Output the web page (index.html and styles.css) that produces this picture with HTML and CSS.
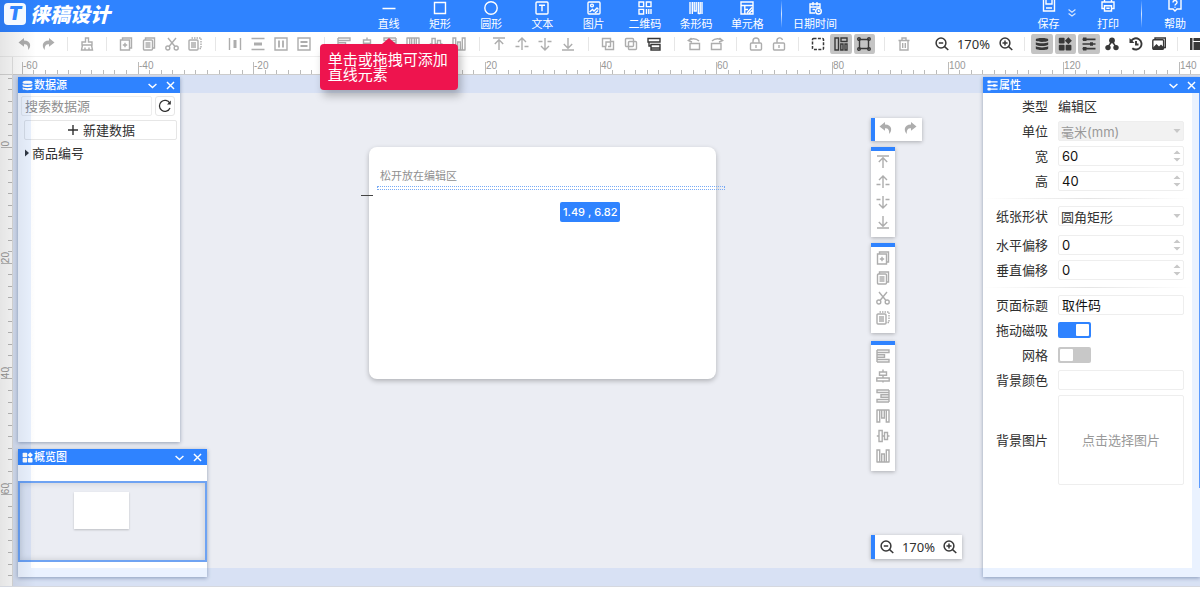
FILE: index.html
```html
<!DOCTYPE html>
<html lang="zh-CN">
<head>
<meta charset="utf-8">
<title>徕稿设计</title>
<link rel="stylesheet" href="styles.css">
</head>
<body>
<svg class="sprite" aria-hidden="true">
  <symbol id="undo" viewBox="0 0 14 14"><path class="fill" d="M6 1 .5 5.400 6 9.800V7.200c3 0 4.400 1.200 4.200 5.800C13 10.500 13.800 3.800 6 3.600z"/></symbol>
  <symbol id="redo" viewBox="0 0 14 14"><path class="fill" d="M8 1l5.500 4.400L8 9.800V7.200c-3 0-4.400 1.200-4.200 5.800C1 10.500.2 3.800 8 3.600z"/></symbol>
  <symbol id="brush" viewBox="0 0 14 14"><path d="M5.500 5V1h3v4H12v3H2V5zM2.500 8 1.500 13h11L11.500 8M5 13v-2.500M9 13v-2.500"/></symbol>
  <symbol id="copyplus" viewBox="0 0 14 14"><path d="M1.500 3h9v10h-9zM3.500 3V1h9v10h-2M6 5.800v4.400M3.800 8h4.400"/></symbol>
  <symbol id="copy" viewBox="0 0 14 14"><rect x="1.500" y="3" width="9" height="10" rx="1"/><path d="M3.500 3V1h9v10h-2M3.500 6h5M3.500 8h5M3.500 10h5"/></symbol>
  <symbol id="cut" viewBox="0 0 14 14"><circle cx="2.800" cy="11" r="2"/><circle cx="11.200" cy="11" r="2"/><path d="M3 1l7 8.500M11 1 4 9.500"/></symbol>
  <symbol id="dup" viewBox="0 0 14 14"><rect x="1" y="3" width="9" height="10" rx="1"/><path d="M3 6h5M3 8h5M3 10h5"/><path stroke-dasharray="1.500 1" d="M3.500 1h9.500v10.500h-3"/></symbol>
  <symbol id="disth" viewBox="0 0 14 14"><path d="M1.500 1v12M12.500 1v12"/><path class="fill" d="M5.500 3h3v8h-3z"/></symbol>
  <symbol id="distv" viewBox="0 0 14 14"><path d="M.5 1.500h13M.5 12.500h13"/><path class="fill" d="M3 5.500h8v3H3z"/></symbol>
  <symbol id="boxh" viewBox="0 0 14 14"><path d="M1 1h12v12H1z"/><path stroke-width="1.800" d="M5 3.500v7M9 3.500v7"/></symbol>
  <symbol id="boxv" viewBox="0 0 14 14"><path d="M1 1h12v12H1z"/><path stroke-width="1.800" d="M3.500 5h7M3.500 9h7"/></symbol>
  <symbol id="al" viewBox="0 0 14 14"><path d="M1 1v12M1 1h12v2.500H1M1 5.700h7.500v2.600H1M1 10.500h12V13H1"/></symbol>
  <symbol id="ac" viewBox="0 0 14 14"><path d="M3.500 3h7v3.200h-7zM.8 9h12.400v3H.8zM7 .5V3M7 6.200V9M7 12v1.500"/></symbol>
  <symbol id="ar" viewBox="0 0 14 14"><path d="M13 1v12M13 1H1v2.500h12M13 5.700H5v2.600h8M13 10.500H1V13h12"/></symbol>
  <symbol id="at" viewBox="0 0 14 14"><path d="M.5 1h13M1 1v12h2.700V1M5.700 1v8h2.600V1M10.300 1v12H13V1"/></symbol>
  <symbol id="am" viewBox="0 0 14 14"><path d="M3 1.500h3.200v11H3zM8.500 3.500h3v7h-3zM.8 7H3M6.200 7h2.300M11.500 7h2"/></symbol>
  <symbol id="ab" viewBox="0 0 14 14"><path d="M.5 13h13M1 13V1h2.700v12M5.700 13V5h2.600v8M10.300 13V1H13v12"/></symbol>
  <symbol id="top" viewBox="0 0 14 14"><path d="M1 1h12M7 13V3M2.800 7 7 2.800 11.200 7"/></symbol>
  <symbol id="up" viewBox="0 0 14 14"><path d="M7 13V1M3 5l4-4 4 4M.5 9.500h4M9.500 9.500h4"/></symbol>
  <symbol id="down" viewBox="0 0 14 14"><path d="M7 1v12M3 9l4 4 4-4M.5 4.500h4M9.500 4.500h4"/></symbol>
  <symbol id="bottom" viewBox="0 0 14 14"><path d="M1 13h12M7 1v10M2.800 7 7 11.200 11.200 7"/></symbol>
  <symbol id="group" viewBox="0 0 14 14"><path d="M5 9.500H1.500v-8h8V5M9 4.500h3.500v8h-8V9M5 9.500V5h4.500v4.500H7"/></symbol>
  <symbol id="ungroup" viewBox="0 0 14 14"><rect x="1.500" y="1.500" width="8" height="8" rx="1"/><rect x="4.500" y="4.500" width="8" height="8" rx="1"/></symbol>
  <symbol id="layers" viewBox="0 0 14 14"><path d="M1 1.500h12V5H1zM4 7.500h9V11H4zM2 5v4h2M4 11v2h9v-2"/></symbol>
  <symbol id="rotl" viewBox="0 0 14 14"><path d="M3 6.500h9.500v6H3zM1.500 3.500C4 1.300 9 1 12 4M4.500 1 1.300 3.600 5 5"/></symbol>
  <symbol id="rotr" viewBox="0 0 14 14"><path d="M1.500 6.500H11v6H1.500zM12.500 3.500C10 1.300 5 1 2 4M9.500 1l3.200 2.600L9 5"/></symbol>
  <symbol id="lock" viewBox="0 0 14 14"><rect x="1.500" y="6" width="11" height="7" rx="1"/><path d="M4 6V4a3 3 0 0 1 6 0v2M7 8v3"/></symbol>
  <symbol id="unlock" viewBox="0 0 14 14"><rect x="1.500" y="6" width="11" height="7" rx="1"/><path d="M5 6V4a2.800 2.800 0 0 1 5.500-1M7 8v3"/></symbol>
  <symbol id="marquee" viewBox="0 0 14 14"><rect x="1.500" y="1.500" width="11" height="11" rx="1" stroke-width="1.500" stroke-dasharray="3 1.400"/></symbol>
  <symbol id="snap" viewBox="0 0 14 14"><path d="M1 1h3.500v12H1zM7 1h6v3.500H7zM6.800 7H9v6H6.800zM11 7h2v6h-2z"/></symbol>
  <symbol id="bound" viewBox="0 0 14 14"><path d="M2.500 2.500h9v9h-9z"/><circle cx="2" cy="2" r="1.300"/><circle cx="12" cy="2" r="1.300"/><circle cx="2" cy="12" r="1.300"/><circle cx="12" cy="12" r="1.300"/></symbol>
  <symbol id="trash" viewBox="0 0 14 14"><path d="M1.500 3.500h11M5 3V1h4v2M3 3.500V13h8V3.500M5.700 6v5M8.300 6v5"/></symbol>
  <symbol id="zout" viewBox="0 0 14 14"><circle cx="6" cy="6" r="4.900" stroke-width="1.500"/><path stroke-width="1.500" d="M3.800 6h4.400M9.600 9.600 13.300 13"/></symbol>
  <symbol id="zin" viewBox="0 0 14 14"><circle cx="6" cy="6" r="4.900" stroke-width="1.500"/><path stroke-width="1.500" d="M3.500 6h5M6 3.500v5M9.600 9.600 13.300 13"/></symbol>
  <symbol id="db" viewBox="0 0 14 14"><path class="fill" d="M.8 2.500C1 .5 13 .5 13.200 2.500v1.200C11 5.300 3 5.300.8 3.700zM.8 5.200c2.500 1.500 9.900 1.500 12.400 0v2.500c-2.200 1.700-10.200 1.700-12.400 0zM.8 9.300c2.500 1.500 9.900 1.500 12.400 0v2.200c-.2 2-12.200 2-12.400 0z"/></symbol>
  <symbol id="widgets" viewBox="0 0 14 14"><rect class="fill" x=".8" y=".8" width="5.800" height="5.800" rx="1"/><path class="fill" d="M10.400.2 13.900 3.700 10.400 7.200 6.900 3.700z"/><rect class="fill" x=".8" y="7.700" width="5.800" height="5.800" rx="1"/><rect class="fill" x="7.600" y="7.700" width="5.800" height="5.800" rx="1"/></symbol>
  <symbol id="props" viewBox="0 0 14 14"><path stroke-width="1.700" d="M.5 2.300h13M.5 7h13M.5 11.700h13"/><path class="fill" d="M1 .6h3.500V4H1zM8 5.300h3v3.400H8zM1 10h3.500v3.400H1z"/></symbol>
  <symbol id="nodes" viewBox="0 0 14 14"><circle class="fill" cx="7" cy="3.400" r="2.900"/><circle class="fill" cx="3" cy="10.600" r="2.700"/><circle class="fill" cx="11" cy="10.600" r="2.700"/><path stroke-width="1.500" d="M3 10 7 4l4 6"/></symbol>
  <symbol id="history" viewBox="0 0 14 14"><path stroke-width="1.900" d="M2 4.200A5.600 5.600 0 1 1 3.300 11.200M7 4v3.500h2.500"/><path class="fill" d="M.5 1v5h5z"/></symbol>
  <symbol id="gallery" viewBox="0 0 14 14"><rect x=".8" y="2.800" width="10.800" height="9.500" rx="1"/><path d="M3 2.500V1h10.400v9.500H12"/><path class="fill" d="M1 10.500 4.500 7 7 9.500l2-2 2.500 2.500v2H1z"/></symbol>
  <symbol id="layout" viewBox="0 0 14 14"><path class="fill" d="M0 1h2.500v12H0zM3.500 1H14v3H3.500zM3.500 5H14v8H3.500z"/></symbol>
  <symbol id="line" viewBox="0 0 14 14"><path stroke-width="1.500" d="M.5 7.500h13"/></symbol>
  <symbol id="rect" viewBox="0 0 14 14"><path d="M1.500 1.500h11v11h-11z"/></symbol>
  <symbol id="circle" viewBox="0 0 14 14"><circle cx="7" cy="7" r="6.200"/></symbol>
  <symbol id="text" viewBox="0 0 14 14"><rect x="1" y="1" width="12" height="12" rx="1"/><path d="M4 4.300h6M7 4.300v6"/></symbol>
  <symbol id="image" viewBox="0 0 14 14"><rect x="1" y="1" width="12" height="12" rx="1"/><circle cx="5" cy="4.500" r="1.400"/><path d="m2.500 11 3-2.500 1.500 1.500 3-3 1.500 1.500M8 12l3-2.500"/></symbol>
  <symbol id="qr" viewBox="0 0 14 14"><path d="M1 1h4.600v4.600H1zM8.400 1H13v4.600H8.400zM1 8.400h4.600V13H1zM8.500 8v5M10.800 8v5M13 8v5"/></symbol>
  <symbol id="bar" viewBox="0 0 14 14"><path d="M1 1v12M3.300 1v12M5.200 1v9h2V1M9.300 1v12M13 1v12M11.200 1v12M9.300 12.500h2"/></symbol>
  <symbol id="cell" viewBox="0 0 14 14"><path d="M1 1h12v12H1zM1 4.500h12M4.800 4.500V13M4.800 8.500H8M7 12l5-5.500M9 12.500l4-4"/></symbol>
  <symbol id="date" viewBox="0 0 14 14"><path d="M7 12H2V3h10v4M2 6h10M5 1v3.500M9 1v3.500M4.500 8.500h2.500"/><circle cx="10.500" cy="10.200" r="2.800"/><path d="M10.500 8.800v1.500h1.300"/></symbol>
  <symbol id="save" viewBox="0 0 14 14"><path d="M1.500 0v13h11V0M4 0v6h6V0M4 10h6"/></symbol>
  <symbol id="print" viewBox="0 0 14 14"><path d="M3.500 4V0h7v4M3.500 10.500H1V4h12v6.500h-2.500M3.500 7.800h7V13h-7zM5.300 10.300h3.400"/></symbol>
  <symbol id="help" viewBox="0 0 14 14"><path d="M4 0H1v11h4l2 2 2-2h4V0h-3M5 4.500c0-2.600 4-2.600 4 0C9 6 7 6 7 7.500M7 8.700V9.700"/></symbol>
  <symbol id="more" viewBox="0 0 14 14"><path d="m3 3 4 3 4-3M3 7.500l4 3 4-3"/></symbol>
  <symbol id="chev" viewBox="0 0 14 14"><path stroke-width="1.800" d="M2 5 7 9.500 12 5"/></symbol>
  <symbol id="close" viewBox="0 0 14 14"><path stroke-width="1.800" d="m2.500 2.500 9 9M11.500 2.500l-9 9"/></symbol>
  <symbol id="plus" viewBox="0 0 14 14"><path d="M7 2v10M2 7h10"/></symbol>
  <symbol id="refresh" viewBox="0 0 14 14"><path stroke-width="1.300" d="M12 9A5.500 5.500 0 1 1 11.800 4.300"/><path class="fill" d="M12.800 1.500V5.500H9z"/></symbol>
  <symbol id="tri" viewBox="0 0 6 8"><path class="fill" d="M1 0.500 5 4 1 7.500z"/></symbol>
  <symbol id="drop" viewBox="0 0 8 12"><path class="fill" d="M.5 4h7L4 8z"/></symbol>
  <symbol id="spin" viewBox="0 0 8 12"><path class="fill" d="M.5 4h7L4 .5zM.5 8h7L4 11.500z"/></symbol>
</svg>

<header class="header">
  <div class="brand"><span class="brand-mark">T</span><span class="brand-name">徕稿设计</span></div>
  <nav class="elements">
    <button class="tool"><svg class="ico"><use href="#line"/></svg>直线<span class="tip" role="tooltip">单击或拖拽可添加直线元素</span></button>
    <button class="tool"><svg class="ico"><use href="#rect"/></svg>矩形</button>
    <button class="tool"><svg class="ico"><use href="#circle"/></svg>圆形</button>
    <button class="tool"><svg class="ico"><use href="#text"/></svg>文本</button>
    <button class="tool"><svg class="ico"><use href="#image"/></svg>图片</button>
    <button class="tool"><svg class="ico"><use href="#qr"/></svg>二维码</button>
    <button class="tool"><svg class="ico"><use href="#bar"/></svg>条形码</button>
    <button class="tool"><svg class="ico"><use href="#cell"/></svg>单元格</button>
  </nav>
  <span class="split"></span>
  <button class="tool wide"><svg class="ico"><use href="#date"/></svg>日期时间</button>
  <div class="actions">
    <button class="tool narrow"><svg class="ico"><use href="#save"/></svg>保存</button>
    <button class="more" aria-label="更多"><svg class="ico small"><use href="#more"/></svg></button>
    <button class="tool wide"><svg class="ico"><use href="#print"/></svg>打印</button>
    <span class="split"></span>
    <button class="tool wide"><svg class="ico"><use href="#help"/></svg>帮助</button>
  </div>
</header>

<div class="toolbar">
  <div class="group g2"><button class="tb" aria-label="撤销"><svg class="ico"><use href="#undo"/></svg></button><button class="tb" aria-label="重做"><svg class="ico"><use href="#redo"/></svg></button></div>
  <div class="group g1"><button class="tb" aria-label="清空"><svg class="ico"><use href="#brush"/></svg></button></div>
  <div class="group g4"><button class="tb" aria-label="创建副本"><svg class="ico"><use href="#copyplus"/></svg></button><button class="tb" aria-label="复制"><svg class="ico"><use href="#copy"/></svg></button><button class="tb" aria-label="剪切"><svg class="ico"><use href="#cut"/></svg></button><button class="tb" aria-label="粘贴"><svg class="ico"><use href="#dup"/></svg></button></div>
  <div class="group g4"><button class="tb" aria-label="水平分布"><svg class="ico"><use href="#disth"/></svg></button><button class="tb" aria-label="垂直分布"><svg class="ico"><use href="#distv"/></svg></button><button class="tb" aria-label="水平居中"><svg class="ico"><use href="#boxh"/></svg></button><button class="tb" aria-label="垂直居中"><svg class="ico"><use href="#boxv"/></svg></button></div>
  <div class="group g6"><button class="tb" aria-label="左对齐"><svg class="ico"><use href="#al"/></svg></button><button class="tb" aria-label="居中对齐"><svg class="ico"><use href="#ac"/></svg></button><button class="tb" aria-label="右对齐"><svg class="ico"><use href="#ar"/></svg></button><button class="tb" aria-label="上对齐"><svg class="ico"><use href="#at"/></svg></button><button class="tb" aria-label="中对齐"><svg class="ico"><use href="#am"/></svg></button><button class="tb" aria-label="下对齐"><svg class="ico"><use href="#ab"/></svg></button></div>
  <div class="group g4"><button class="tb" aria-label="置顶"><svg class="ico"><use href="#top"/></svg></button><button class="tb" aria-label="上移"><svg class="ico"><use href="#up"/></svg></button><button class="tb" aria-label="下移"><svg class="ico"><use href="#down"/></svg></button><button class="tb" aria-label="置底"><svg class="ico"><use href="#bottom"/></svg></button></div>
  <div class="group g3"><button class="tb" aria-label="组合"><svg class="ico"><use href="#group"/></svg></button><button class="tb" aria-label="取消组合"><svg class="ico"><use href="#ungroup"/></svg></button><button class="tb dark" aria-label="图层"><svg class="ico"><use href="#layers"/></svg></button></div>
  <div class="group g2"><button class="tb" aria-label="左旋转"><svg class="ico"><use href="#rotl"/></svg></button><button class="tb" aria-label="右旋转"><svg class="ico"><use href="#rotr"/></svg></button></div>
  <div class="group g2"><button class="tb" aria-label="锁定"><svg class="ico"><use href="#lock"/></svg></button><button class="tb" aria-label="解锁"><svg class="ico"><use href="#unlock"/></svg></button></div>
  <div class="group g3"><button class="tb dark" aria-label="框选"><svg class="ico"><use href="#marquee"/></svg></button><button class="tb dark on" aria-label="吸附"><svg class="ico"><use href="#snap"/></svg></button><button class="tb dark on" aria-label="边界"><svg class="ico"><use href="#bound"/></svg></button></div>
  <div class="group g1"><button class="tb" aria-label="删除"><svg class="ico"><use href="#trash"/></svg></button></div>
  <div class="zoomer"><button class="tb dark" aria-label="缩小"><svg class="ico"><use href="#zout"/></svg></button><span class="pct">170%</span><button class="tb dark" aria-label="放大"><svg class="ico"><use href="#zin"/></svg></button></div>
  <div class="group g6"><button class="tb dark on" aria-label="数据源"><svg class="ico"><use href="#db"/></svg></button><button class="tb dark on" aria-label="概览图"><svg class="ico"><use href="#widgets"/></svg></button><button class="tb dark on" aria-label="属性"><svg class="ico"><use href="#props"/></svg></button><button class="tb dark" aria-label="结构"><svg class="ico"><use href="#nodes"/></svg></button><button class="tb dark" aria-label="历史"><svg class="ico"><use href="#history"/></svg></button><button class="tb dark" aria-label="图库"><svg class="ico"><use href="#gallery"/></svg></button></div>
  <div class="group last"><button class="tb dark" aria-label="布局"><svg class="ico"><use href="#layout"/></svg></button></div>
</div>

<main class="work">
  <div class="corner"></div>
  <div class="ruler ruler-x" id="ruler-x"></div>
  <div class="ruler ruler-y" id="ruler-y"></div>
  <div class="stage">
    <div class="paper"></div>
    <span class="hint">松开放在编辑区</span>
    <div class="ghost"></div>
    <div class="cursor"></div>
    <div class="coords">1.49 , 6.82</div>

    <section class="panel data">
      <h2 class="bar"><svg class="ico mini"><use href="#db"/></svg><span class="name">数据源</span><button class="bar-btn" aria-label="折叠"><svg class="ico mini"><use href="#chev"/></svg></button><button class="bar-btn" aria-label="关闭"><svg class="ico mini"><use href="#close"/></svg></button></h2>
      <div class="search"><input class="field" type="text" placeholder="搜索数据源" aria-label="搜索数据源"><button class="refresh" aria-label="刷新"><svg class="ico"><use href="#refresh"/></svg></button></div>
      <button class="new"><svg class="ico"><use href="#plus"/></svg>新建数据</button>
      <div class="node"><svg class="tri"><use href="#tri"/></svg>商品编号</div>
    </section>

    <section class="panel overview">
      <h2 class="bar"><svg class="ico mini"><use href="#widgets"/></svg><span class="name">概览图</span><button class="bar-btn" aria-label="折叠"><svg class="ico mini"><use href="#chev"/></svg></button><button class="bar-btn" aria-label="关闭"><svg class="ico mini"><use href="#close"/></svg></button></h2>
      <div class="view"><div class="thumb"></div></div>
    </section>

    <section class="panel props">
      <h2 class="bar"><svg class="ico mini"><use href="#props"/></svg><span class="name">属性</span><button class="bar-btn" aria-label="折叠"><svg class="ico mini"><use href="#chev"/></svg></button><button class="bar-btn" aria-label="关闭"><svg class="ico mini"><use href="#close"/></svg></button></h2>
      <div class="rows">
        <div class="row"><span class="label">类型</span><span>编辑区</span></div>
        <div class="row"><label class="label" for="unit">单位</label><span class="ctl"><select class="field" id="unit" disabled><option>毫米(mm)</option></select><svg class="arrow"><use href="#drop"/></svg></span></div>
        <div class="row"><label class="label" for="w">宽</label><span class="ctl"><input class="field" id="w" type="number" value="60"><svg class="arrow"><use href="#spin"/></svg></span></div>
        <div class="row"><label class="label" for="h">高</label><span class="ctl"><input class="field" id="h" type="number" value="40"><svg class="arrow"><use href="#spin"/></svg></span></div>
      </div>
      <div class="rule"></div>
      <div class="rows">
        <div class="row spaced"><label class="label" for="shape">纸张形状</label><span class="ctl"><select class="field" id="shape"><option>圆角矩形</option></select><svg class="arrow"><use href="#drop"/></svg></span></div>
        <div class="row"><label class="label" for="ox">水平偏移</label><span class="ctl"><input class="field" id="ox" type="number" value="0"><svg class="arrow"><use href="#spin"/></svg></span></div>
        <div class="row"><label class="label" for="oy">垂直偏移</label><span class="ctl"><input class="field" id="oy" type="number" value="0"><svg class="arrow"><use href="#spin"/></svg></span></div>
      </div>
      <div class="rule"></div>
      <div class="rows">
        <div class="row"><label class="label" for="title">页面标题</label><span class="ctl"><input class="field" id="title" type="text" value="取件码"></span></div>
        <div class="row"><label class="label" for="mag">拖动磁吸</label><input class="switch" id="mag" type="checkbox" checked></div>
        <div class="row"><label class="label" for="grid">网格</label><input class="switch" id="grid" type="checkbox"></div>
        <div class="row"><label class="label" for="bg">背景颜色</label><span class="ctl"><input class="field" id="bg" type="text"></span></div>
        <div class="row"><span class="label">背景图片</span><button class="pick">点击选择图片</button></div>
      </div>
      <div class="scroll"></div>
    </section>

    <div class="float f-hist"><button class="tb" aria-label="撤销"><svg class="ico"><use href="#undo"/></svg></button><button class="tb" aria-label="重做"><svg class="ico"><use href="#redo"/></svg></button></div>
    <div class="float col f-order"><button class="tb" aria-label="置顶"><svg class="ico"><use href="#top"/></svg></button><button class="tb" aria-label="上移"><svg class="ico"><use href="#up"/></svg></button><button class="tb" aria-label="下移"><svg class="ico"><use href="#down"/></svg></button><button class="tb" aria-label="置底"><svg class="ico"><use href="#bottom"/></svg></button></div>
    <div class="float col f-edit"><button class="tb" aria-label="创建副本"><svg class="ico"><use href="#copyplus"/></svg></button><button class="tb" aria-label="复制"><svg class="ico"><use href="#copy"/></svg></button><button class="tb" aria-label="剪切"><svg class="ico"><use href="#cut"/></svg></button><button class="tb" aria-label="粘贴"><svg class="ico"><use href="#dup"/></svg></button></div>
    <div class="float col f-align"><button class="tb" aria-label="左对齐"><svg class="ico"><use href="#al"/></svg></button><button class="tb" aria-label="居中对齐"><svg class="ico"><use href="#ac"/></svg></button><button class="tb" aria-label="右对齐"><svg class="ico"><use href="#ar"/></svg></button><button class="tb" aria-label="上对齐"><svg class="ico"><use href="#at"/></svg></button><button class="tb" aria-label="中对齐"><svg class="ico"><use href="#am"/></svg></button><button class="tb" aria-label="下对齐"><svg class="ico"><use href="#ab"/></svg></button></div>
    <div class="float f-zoom"><button class="tb dark" aria-label="缩小"><svg class="ico"><use href="#zout"/></svg></button><span class="pct">170%</span><button class="tb dark" aria-label="放大"><svg class="ico"><use href="#zin"/></svg></button></div>

    <div class="edges"></div>
  </div>
  <div class="shade"></div>
</main>
<script src="ruler.js"></script>
</body>
</html>
```
FILE: ruler.js
```js
// Draws ruler ticks every 2 mm with a long mark every 20 mm.
const PX_PER_MM = 5.785;

function drawRuler(id, side, origin, from, to, labelOrigin) {
  const ruler = document.getElementById(id);
  for (let mm = from; mm <= to; mm += 2) {
    const tick = document.createElement('span');
    const major = mm % 20 === 0;
    tick.className = major ? 'tick major' : 'tick';
    tick.style[side] = Math.round(origin + mm * PX_PER_MM) + 'px';
    if (major && (mm !== 0 || labelOrigin)) {
      const label = document.createElement('span');
      label.className = 'num';
      label.textContent = mm;
      tick.appendChild(label);
    }
    ruler.appendChild(tick);
  }
}

drawRuler('ruler-x', 'left', 356, -60, 142, false);
drawRuler('ruler-y', 'top', 72, -12, 74, true);
```
FILE: styles.css
```css
* { box-sizing: border-box; }

body {
  margin: 0;
  height: 100vh;
  padding-bottom: 3px;
  display: flex;
  flex-direction: column;
  overflow: hidden;
  background: #fff;
  color: #303030;
  font: 13px/20px "Noto Sans", "Noto Sans CJK SC", sans-serif;
}

button, input, select {
  margin: 0;
  padding: 0;
  border: 0;
  background: none;
  color: inherit;
  font: inherit;
}

.sprite { display: none; }

svg path, svg rect, svg circle { fill: none; stroke: currentColor; }
svg .fill { fill: currentColor; stroke: none; }

.ico { width: 14px; height: 14px; flex: none; stroke-width: 1.4px; }
.ico.mini { width: 11px; height: 11px; }
.ico.small { width: 12px; height: 12px; }

/* Header */
.header {
  flex: none;
  height: 32px;
  display: flex;
  background: linear-gradient(to right, #2b78ee, #2f83ff 40px);
  color: #fff;
}
.brand { width: 363px; padding: 3px 4px; display: flex; gap: 4px; }
.brand-mark {
  width: 22px;
  height: 22px;
  border-radius: 4px;
  background: #f5f9ff;
  color: #2f83ff;
  font: italic 900 19px/22px Inter, sans-serif;
  text-align: center;
}
.brand-name { font: italic 900 20px/22px "Noto Sans CJK SC", sans-serif; }
.elements { width: 410px; display: grid; grid-template-columns: repeat(8, 1fr); }
.tool {
  position: relative;
  display: flex;
  flex-direction: column;
  align-items: center;
  justify-content: flex-end;
  gap: 1px;
  font-size: 11px;
  line-height: 16px;
  white-space: nowrap;
}
.tool.wide { width: 50px; }
.tool.narrow { width: 25px; }
.split {
  width: 1px;
  height: 28px;
  margin: 0 8px;
  background: linear-gradient(transparent, #d5e6ff, transparent);
}
.actions { margin-left: auto; display: flex; overflow: hidden; }
.actions .tool { gap: 4px; }
.more { width: 22px; padding-bottom: 6px; display: flex; align-items: center; justify-content: center; opacity: .8; }

.tip {
  position: absolute;
  z-index: 10;
  top: 44px;
  left: 50%;
  width: 138px;
  margin-left: -69px;
  padding: 8px;
  border-radius: 4px;
  background: #ee144e;
  box-shadow: 3px 6px 8px rgba(0, 0, 0, .25);
  font-size: 15px;
  line-height: 15px;
  text-align: left;
  white-space: normal;
}
.tip::before {
  content: "";
  position: absolute;
  top: -6px;
  left: 62px;
  border: 7px solid transparent;
  border-top: 0;
  border-bottom: 6px solid #ee144e;
}

/* Toolbar */
.toolbar {
  flex: none;
  height: 25px;
  padding-left: 5px;
  display: flex;
  align-items: center;
  overflow: hidden;
  border-bottom: 1px solid #eee;
}
.group { flex: none; height: 20px; padding: 0 8px; display: flex; position: relative; }
.group + .group::before, .zoomer + .group::before {
  content: "";
  position: absolute;
  left: 0;
  top: 3px;
  width: 1px;
  height: 14px;
  background: #e6e6e6;
}
.g1 { width: 39px; }
.g2 { width: 62px; }
.g3 { width: 86px; }
.g4 { width: 109px; }
.g6 { width: 155px; }
.zoomer + .g6 { width: 153px; padding: 0 6px; }
.last { padding-left: 10px; }
.group .tb { flex: 1 0 20px; }
.tb {
  width: 20px;
  height: 20px;
  display: flex;
  align-items: center;
  justify-content: center;
  color: #adadad;
}
.dark { color: #383838; }
.on { background: #c4c4c4 content-box; padding: 0 1px; border-radius: 3px; }
.zoomer { flex: none; width: 101px; display: flex; justify-content: center; gap: 2px; }
.pct { width: 39px; text-align: center; }
.zoomer .pct { width: 40px; }

/* Rulers and canvas */
.work {
  position: relative;
  flex: 1;
  min-height: 0;
  display: grid;
  grid-template: 18px 1fr / 13px 1fr;
  border-bottom: 1px solid #d5d8df;
}
.corner { border-right: 1px solid #e4e4e4; border-bottom: 1px solid #d8d8d8; }
.ruler { position: relative; overflow: hidden; color: #999; font: 10px/10px "Liberation Sans", sans-serif; }
.ruler-x { border-bottom: 1px solid #ccc; }
.ruler-y { border-right: 1px solid #ddd; }
.tick { position: absolute; background: #bbb; }
.ruler-x .tick { bottom: 0; width: 1px; height: 4px; }
.ruler-x .major { height: 12px; }
.ruler-y .tick { right: 0; height: 1px; width: 4px; }
.ruler-y .major { width: 11px; }
.num { position: absolute; left: 1px; top: -1px; }
.ruler-y .num { left: 0; top: auto; bottom: 1px; writing-mode: vertical-rl; transform: rotate(180deg); }
.stage {
  position: relative;
  overflow: hidden;
  background: #ebedf3;
}
.edges {
  position: absolute;
  inset: 0;
  z-index: 2;
  pointer-events: none;
  border: 18px solid rgba(47, 131, 255, .1);
  border-right-width: 8px;
}
.shade {
  position: absolute;
  z-index: 5;
  inset: -25px auto 0 0;
  width: 36px;
  pointer-events: none;
  background: linear-gradient(to right, rgba(0, 0, 0, .1), transparent);
}
.paper {
  position: absolute;
  left: 356px;
  top: 72px;
  width: 347px;
  height: 232px;
  border-radius: 8px;
  background: #fff;
  box-shadow: 0 2px 5px rgba(0, 0, 0, .25);
}
.hint { position: absolute; left: 367px; top: 93px; font-size: 11px; line-height: 16px; color: #909090; }
.ghost { position: absolute; left: 364px; top: 111px; width: 348px; height: 4px; border: 1px dotted #78aaf5; }
.cursor { position: absolute; left: 348px; top: 120px; width: 12px; height: 1px; background: #444; }
.coords {
  position: absolute;
  left: 547px;
  top: 127px;
  padding: 0 3px;
  border-radius: 2px;
  background: #2f83ff;
  color: #fff;
  font: 500 11px/20px Inter, sans-serif;
}

/* Panels */
.panel { position: absolute; background: #fff; box-shadow: 0 1px 4px rgba(40, 60, 100, .45); }
.data { left: 5px; top: 2px; width: 162px; height: 365px; }
.overview { left: 5px; bottom: 9px; width: 189px; height: 128px; }
.props { right: 0; top: 2px; bottom: 9px; width: 217px; }
.bar {
  position: relative;
  z-index: 3;
  height: 16px;
  margin: 0;
  padding: 0 4px;
  display: flex;
  align-items: center;
  gap: 1px;
  background: #2f83ff;
  color: #fff;
  font-size: 11px;
  font-weight: 500;
  line-height: 16px;
}
.bar .name { flex: 1; }
.bar-btn { width: 11px; height: 11px; display: flex; margin-left: 6px; }
.props .bar { padding-right: 3px; }
.search { display: flex; gap: 3px; padding: 3px 5px 4px 3px; }
.field {
  width: 100%;
  height: 20px;
  padding: 0 3px;
  border: 1px solid #eee;
  border-radius: 2px;
  appearance: none;
  background: transparent;
}
.field::placeholder { color: #8f8f8f; }
.field::-webkit-inner-spin-button { appearance: none; }
.refresh {
  flex: none;
  width: 20px;
  height: 20px;
  display: flex;
  align-items: center;
  justify-content: center;
  border: 1px solid #e6e6e6;
  border-radius: 3px;
}
.new {
  width: 153px;
  height: 20px;
  margin-left: 6px;
  display: flex;
  align-items: center;
  justify-content: center;
  gap: 3px;
  border: 1px solid #e6e6e6;
  border-radius: 2px;
}
.node { display: flex; align-items: center; gap: 2px; padding: 3px 6px; }
.tri { width: 6px; height: 8px; }
.view {
  height: 81px;
  margin-top: 16px;
  padding: 9px 54px;
  border: 2px solid #6fa3f2;
  background: #ebedf3;
  box-shadow: inset 0 0 6px rgba(0, 0, 0, .15);
}
.thumb { width: 55px; height: 37px; background: #fff; box-shadow: 0 1px 2px rgba(0, 0, 0, .2); }

.rows { display: grid; gap: 5px; padding: 3px 0 7px; }
.rule + .rows { padding-top: 7px; }
.rule { height: 1px; margin-right: 8px; background: linear-gradient(to right, transparent, #e4e4e4, transparent); }
.row { display: grid; grid-template-columns: 65px 126px; gap: 10px; align-items: center; min-height: 20px; }
.spaced { margin-bottom: 4px; }
.label { text-align: right; }
.ctl { position: relative; display: flex; }
.ctl .field { font-family: Inter, "Noto Sans CJK SC", sans-serif; color: #111; }
.ctl select.field { padding: 0 2px; color: #333; }
.ctl .field:disabled { background: #f2f2f2; color: #999; opacity: 1; }
.arrow { position: absolute; right: 3px; top: 4px; width: 8px; height: 12px; color: #c8c8c8; pointer-events: none; }
.switch {
  appearance: none;
  width: 33px;
  height: 16px;
  padding: 2px;
  display: flex;
  border-radius: 2px;
  background: #c8c8c8;
}
.switch::before { content: ""; width: 13px; height: 12px; border-radius: 1px; background: #fff; }
.switch:checked { justify-content: flex-end; background: #2f83ff; }
.pick { height: 90px; border: 1px solid #eee; border-radius: 2px; color: #999; }
.scroll { position: absolute; z-index: 3; right: 0; top: 16px; width: 1px; height: 395px; background: #5b9bff; }

/* Floating tool strips */
.float {
  position: absolute;
  left: 858px;
  display: flex;
  border-left: 4px solid #2f83ff;
  background: #fff;
  box-shadow: 0 1px 4px rgba(0, 0, 0, .28);
}
.float.col {
  flex-direction: column;
  width: 24px;
  padding: 1px 2px 5px;
  border-left: 0;
  border-top: 4px solid #2f83ff;
}
.f-hist { top: 43px; padding: 0 2px 3px 1px; gap: 4px; }
.f-order { top: 72px; }
.f-edit { top: 168px; }
.f-align { top: 266px; }
.f-zoom { bottom: 27px; padding: 2px; gap: 2px; }
```
